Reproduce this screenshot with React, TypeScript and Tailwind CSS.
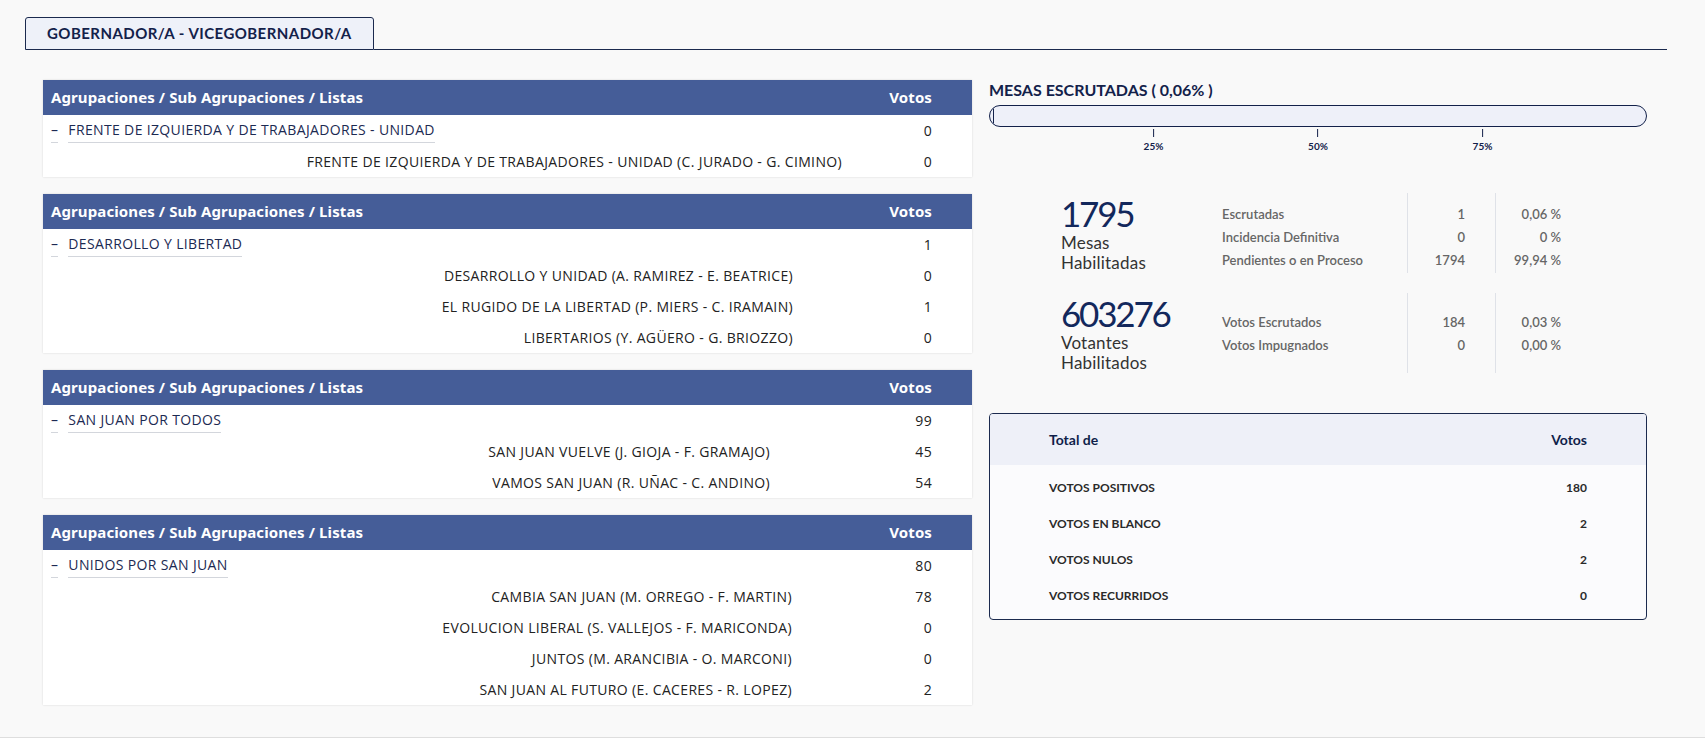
type ListRow = { name: string; votes: number };
type Group = { name: string; votes: number; cols: string; lists: ListRow[] };

const groups: Group[] = [
  {
    name: "FRENTE DE IZQUIERDA Y DE TRABAJADORES - UNIDAD",
    votes: 0,
    cols: "grid-cols-[1fr_90px]",
    lists: [{ name: "FRENTE DE IZQUIERDA Y DE TRABAJADORES - UNIDAD (C. JURADO - G. CIMINO)", votes: 0 }],
  },
  {
    name: "DESARROLLO Y LIBERTAD",
    votes: 1,
    cols: "grid-cols-[1fr_139px]",
    lists: [
      { name: "DESARROLLO Y UNIDAD (A. RAMIREZ - E. BEATRICE)", votes: 0 },
      { name: "EL RUGIDO DE LA LIBERTAD (P. MIERS - C. IRAMAIN)", votes: 1 },
      { name: "LIBERTARIOS (Y. AGÜERO - G. BRIOZZO)", votes: 0 },
    ],
  },
  {
    name: "SAN JUAN POR TODOS",
    votes: 99,
    cols: "grid-cols-[1fr_162px]",
    lists: [
      { name: "SAN JUAN VUELVE (J. GIOJA - F. GRAMAJO)", votes: 45 },
      { name: "VAMOS SAN JUAN (R. UÑAC - C. ANDINO)", votes: 54 },
    ],
  },
  {
    name: "UNIDOS POR SAN JUAN",
    votes: 80,
    cols: "grid-cols-[1fr_140px]",
    lists: [
      { name: "CAMBIA SAN JUAN (M. ORREGO - F. MARTIN)", votes: 78 },
      { name: "EVOLUCION LIBERAL (S. VALLEJOS - F. MARICONDA)", votes: 0 },
      { name: "JUNTOS (M. ARANCIBIA - O. MARCONI)", votes: 0 },
      { name: "SAN JUAN AL FUTURO (E. CACERES - R. LOPEZ)", votes: 2 },
    ],
  },
];

const totals = [
  { label: "VOTOS POSITIVOS", value: 180 },
  { label: "VOTOS EN BLANCO", value: 2 },
  { label: "VOTOS NULOS", value: 2 },
  { label: "VOTOS RECURRIDOS", value: 0 },
];

function GroupCard({ group }: { group: Group }) {
  return (
    <div className="bg-white shadow-[0_0_2px_rgba(0,0,0,0.14)]">
      <div className="flex h-[35px] items-center justify-between bg-[#455d98] pl-[8px] pr-[40px] font-['Noto_Sans',sans-serif] text-[15px] font-bold tracking-[0.1px] text-white">
        <span>Agrupaciones / Sub Agrupaciones / Listas</span>
        <span>Votos</span>
      </div>
      <div className="font-['Open_Sans',sans-serif] text-[14px] tracking-[0.35px] text-[#222]">
        <div className="flex h-[31px] items-center justify-between pr-[40px]">
          <div className="flex items-center pl-[8px] pt-[2px] text-[#1c2a52]">
            <span className="border-b border-[#d3d6dc] pb-[2px] leading-[20px]">–</span>
            <span className="ml-[10px] border-b border-[#d3d6dc] pb-[2px] leading-[20px]">{group.name}</span>
          </div>
          <div className="text-right">{group.votes}</div>
        </div>
        {group.lists.map((l) => (
          <div key={l.name} className={`grid h-[31px] ${group.cols} items-center pr-[40px]`}>
            <div className="text-right">{l.name}</div>
            <div className="text-right">{l.votes}</div>
          </div>
        ))}
      </div>
    </div>
  );
}

function StatBlock({
  big,
  sub1,
  sub2,
  rows,
  padTop,
}: {
  big: string;
  sub1: string;
  sub2: string;
  rows: [string, string, string][];
  padTop: string;
}) {
  const cell = `${padTop} text-[13px] font-semibold leading-[23px] text-[#666]`;
  return (
    <div className="ml-[72px] flex">
      <div className="w-[161px]">
        <div className="text-[35px] font-normal leading-[40px] tracking-[-2.2px] text-[#13285c]">{big}</div>
        <div className="text-[17px] leading-[20px] tracking-[0.2px] text-[#333]">{sub1}</div>
        <div className="text-[17px] leading-[20px] tracking-[0.2px] text-[#333]">{sub2}</div>
      </div>
      <div className={`w-[185px] ${cell}`}>
        {rows.map((r) => (
          <div key={r[0]}>{r[0]}</div>
        ))}
      </div>
      <div className={`w-[88px] border-l border-[#dfe2e8] pr-[30px] text-right ${cell}`}>
        {rows.map((r) => (
          <div key={r[0]}>{r[1]}</div>
        ))}
      </div>
      <div className={`w-[66px] border-l border-[#dfe2e8] text-right ${cell}`}>
        {rows.map((r) => (
          <div key={r[0]}>{r[2]}</div>
        ))}
      </div>
    </div>
  );
}

export default function App() {
  return (
    <div className="h-[738px] border-b border-[#dedede] bg-[#f9f9f9] font-['Lato',sans-serif]">
      <div className="flex items-end pl-[25px] pr-[38px] pt-[17px]">
        <div className="flex h-[33px] items-center rounded-t-[3px] border border-[#1b2a4e] bg-[#eef1f9] px-[21px] text-[15px] font-bold tracking-[0.45px] text-[#13214a]">
          GOBERNADOR/A - VICEGOBERNADOR/A
        </div>
        <div className="flex-1 border-b border-[#1b2a4e]" />
      </div>

      <div className="flex gap-[17px] pl-[43px] pt-[30px]">
        <div className="flex w-[929px] flex-col gap-[17px]">
          {groups.map((g) => (
            <GroupCard key={g.name} group={g} />
          ))}
        </div>

        <div className="w-[658px]">
          <div className="text-[16px] font-bold leading-[20px] text-[#13214a]">MESAS ESCRUTADAS ( 0,06% )</div>
          <div className="mt-[5px] h-[22px] overflow-hidden rounded-full border border-[#13214a] bg-[#eef0f9]">
            <div className="h-full min-w-[4px] border-r border-[#13214a]" style={{ width: "0.06%" }} />
          </div>
          <div className="relative h-[25px]">
            {["25%", "50%", "75%"].map((p, i) => (
              <div
                key={p}
                className={`absolute top-0 flex -translate-x-1/2 flex-col items-center ${
                  i === 0 ? "left-[25%]" : i === 1 ? "left-[50%]" : "left-[75%]"
                }`}
              >
                <div className="mt-[2px] h-[8px] w-px bg-[#13214a]" />
                <div className="mt-[3px] text-[10px] font-bold leading-[12px] text-[#13214a]">{p}</div>
              </div>
            ))}
          </div>

          <div className="mt-[41px]">
            <StatBlock
              big="1795"
              sub1="Mesas"
              sub2="Habilitadas"
              padTop="pt-[10px]"
              rows={[
                ["Escrutadas", "1", "0,06 %"],
                ["Incidencia Definitiva", "0", "0 %"],
                ["Pendientes o en Proceso", "1794", "99,94 %"],
              ]}
            />
          </div>
          <div className="mt-[20px]">
            <StatBlock
              big="603276"
              sub1="Votantes"
              sub2="Habilitados"
              padTop="pt-[18px]"
              rows={[
                ["Votos Escrutados", "184", "0,03 %"],
                ["Votos Impugnados", "0", "0,00 %"],
              ]}
            />
          </div>

          <div className="mt-[40px] overflow-hidden rounded-[4px] border border-[#1b2a4e] bg-[#fbfbfd]">
            <div className="flex h-[51px] items-center justify-between bg-[#eef0f8] px-[59px] text-[14px] font-bold text-[#0f1f4a]">
              <span>Total de</span>
              <span>Votos</span>
            </div>
            <div className="py-[5px]">
              {totals.map((t) => (
                <div
                  key={t.label}
                  className="flex h-[36px] items-center justify-between px-[59px] text-[12px] font-bold text-[#2a2a2a]"
                >
                  <span>{t.label}</span>
                  <span>{t.value}</span>
                </div>
              ))}
            </div>
          </div>
        </div>
      </div>
    </div>
  );
}
